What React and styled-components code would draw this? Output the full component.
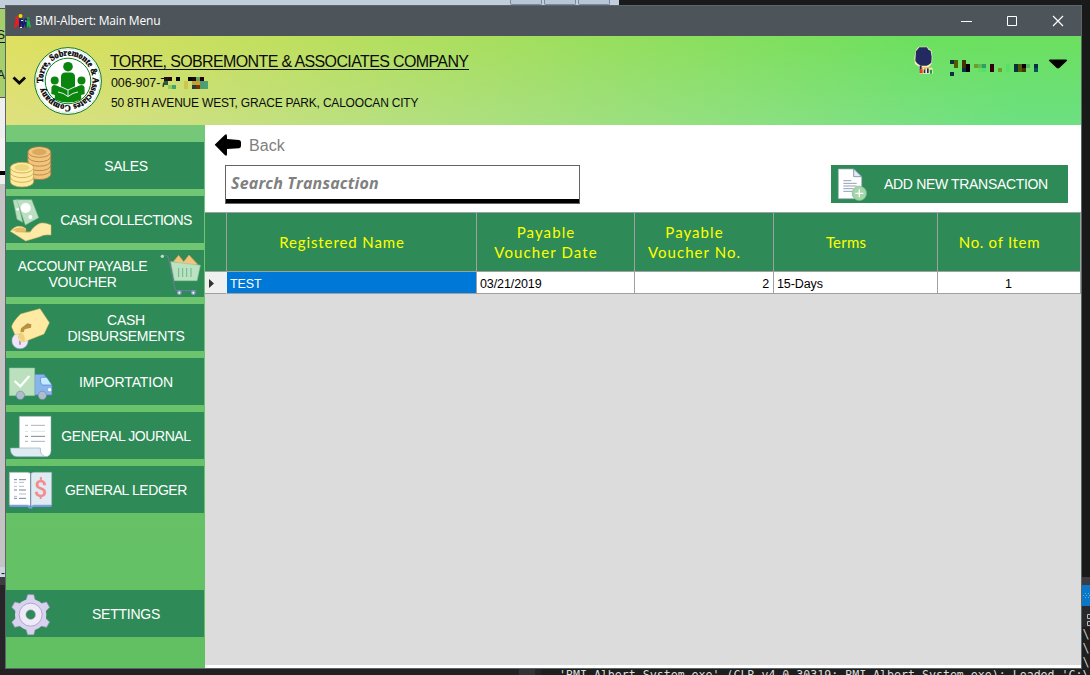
import React from 'react';
import styled, { createGlobalStyle } from 'styled-components';

const sans = '"Liberation Sans", Arial, sans-serif';
const green = '#2e8b57';

const Global = createGlobalStyle`
  * { box-sizing: border-box; }
  body { margin: 0; background: #1b1b1c; overflow: hidden; font-family: ${sans}; }
  svg { display: block; flex: none; }
`;

const Desktop = styled.div`
  width: 1090px;
  height: 675px;
  display: grid;
  grid-template-rows: 5px 664px 6px;
  overflow: hidden;
  background: #1b1b1c;
`;
const Middle = styled.div`
  display: grid;
  grid-template-columns: 5px 1077px 8px;
  min-height: 0;
`;
const TopStrip = styled.div`
  display: flex;
  overflow: hidden;
  background: #1a1a1a;
`;
const Toolbar = styled.div`
  width: 619px;
  height: 5px;
  padding-left: 510px;
  display: flex;
  gap: 2px;
  background: #c2cedb;
`;
const ToolButton = styled.span`
  width: 32px;
  height: 5px;
  border: 1px solid #7887a3;
  border-top: 0;
  border-radius: 0 0 2px 2px;
  background: #b9c6d5;
`;
const Side = styled.div`
  display: flex;
  flex-direction: column;
  overflow: hidden;
`;
const Slab = styled.div`
  flex: none;
  height: ${(p) => p.$h}px;
  background: ${(p) => p.$c};
  color: ${(p) => p.$fg || '#111'};
  font: ${(p) => p.$font || `12px/1 ${sans}`};
  padding-top: ${(p) => p.$top || 0}px;
  display: flex;
  justify-content: ${(p) => p.$align || 'flex-end'};
  border-bottom: ${(p) => (p.$dash ? '1px dashed #555' : '0')};
  text-decoration: ${(p) => (p.$line ? 'underline' : 'none')};
  text-underline-offset: 3px;
  white-space: pre;
  overflow: hidden;
`;
const Output = styled.div`
  padding-left: 559px;
  background: linear-gradient(90deg, #222224 519px, #343438 519px 535px, #252526 535px 541px, #1e1e1e 541px);
  color: #dcdcdc;
  font: 11.6px/13px "DejaVu Sans Mono", monospace;
  white-space: pre;
  overflow: hidden;
`;

const Win = styled.section`
  border: 1px solid #5b6669;
  display: grid;
  grid-template-rows: 30px 89px 1fr;
  overflow: hidden;
`;
const TitleBar = styled.header`
  display: flex;
  align-items: center;
  background: #4d545a;
  color: #fff;
  padding-left: 8px;
`;
const TitleText = styled.span`
  font: 12px/16px "Open Sans", sans-serif;
  letter-spacing: -0.18px;
  margin-left: 4px;
  flex: 1;
`;
const Controls = styled.div`
  display: flex;
  gap: 34px;
  padding-right: 17px;
`;

const Banner = styled.div`
  position: relative;
  display: flex;
  background: linear-gradient(96deg, #e0e05e, #a6df5d 46%, #6ce05e 84%);
  &::before {
    content: '';
    position: absolute;
    inset: 0;
    background: linear-gradient(96deg, #e0e080, #a6df80 50%, #6ce082 94%);
    mask-image: linear-gradient(#0000, #000);
  }
  > * { position: relative; }
`;
const Company = styled.div`
  padding: 16px 0 0 8px;
  flex: 1;
  color: #0c0c0c;
`;
const CompanyName = styled.div`
  font: 16px/20px ${sans};
  letter-spacing: -0.63px;
  width: 359px;
  height: 18px;
  border-bottom: 1px solid #111;
  white-space: nowrap;
`;
const CompanyLine = styled.div`
  display: flex;
  align-items: center;
  font: ${(p) => p.$size}px/20px ${sans};
  letter-spacing: ${(p) => p.$ls}px;
  height: 20px;
  margin-left: 1px;
  margin-top: ${(p) => p.$mt || 0}px;
  white-space: nowrap;
  svg { margin-left: -3px; }
`;
const User = styled.div`
  display: flex;
  align-items: flex-start;
  padding: 10px 13px 0 0;
`;
const UserName = styled.div`
  padding: 14px 0 0 16px;
`;

const Body = styled.div`
  display: grid;
  grid-template-columns: 199px 1fr;
  min-height: 0;
`;
const Nav = styled.nav`
  display: flex;
  flex-direction: column;
  gap: 7px;
  padding: 17px 1px 31px 0;
  background: linear-gradient(#74c878, #66c166 75%, #61c061);
`;
const NavButton = styled.div`
  height: 47px;
  display: flex;
  flex-direction: ${(p) => (p.$right ? 'row-reverse' : 'row')};
  align-items: center;
  background: ${green};
  color: #fff;
  margin-top: ${(p) => (p.$last ? 'auto' : 0)};
`;
const NavLabel = styled.span`
  flex: 1;
  text-align: center;
  font: 14px/16px ${sans};
  letter-spacing: ${(p) => p.$ls || 0}px;
  padding: ${(p) => (p.$right ? '1px 0 0 3px' : '1px 6px 0 0')};
  white-space: pre;
`;

const Main = styled.main`
  display: flex;
  flex-direction: column;
  background: #fff;
  padding-bottom: 3px;
  min-width: 0;
`;
const Back = styled.div`
  display: flex;
  align-items: center;
  gap: 8px;
  height: 40px;
  padding-left: 9px;
  color: #808080;
  font: 16px/20px ${sans};
  letter-spacing: 0.1px;
`;
const BackText = styled.span`
  padding-top: 1px;
`;
const Actions = styled.div`
  display: flex;
  justify-content: space-between;
  padding: 0 13px 0 20px;
  height: 47px;
`;
const Search = styled.div`
  width: 355px;
  height: 39px;
  border: 1px solid #646464;
  box-shadow: inset 0 -4px #000;
  padding: 6px 0 0 5px;
  color: #808080;
  font: italic bold 16px/22px "Open Sans", sans-serif;
  letter-spacing: 0.17px;
`;
const AddButton = styled.div`
  width: 237px;
  height: 38px;
  display: flex;
  align-items: center;
  background: ${green};
  color: #fff;
  font: 14px/16px ${sans};
  letter-spacing: -0.33px;
  white-space: nowrap;
`;
const Grid = styled.div`
  flex: 1;
  background: #dcdcdc;
`;
const Row = styled.div`
  display: grid;
  grid-template-columns: 22px 250px 158px 139px 164px 143px;
  height: ${(p) => p.$h}px;
  border-top: ${(p) => (p.$head ? 1 : 0)}px solid #a0a0a0;
`;
const HeadCell = styled.div`
  display: flex;
  align-items: center;
  justify-content: center;
  text-align: center;
  padding: 0 19px 0 0;
  background: ${green};
  color: #ff0;
  font: 15px/20px Lato, "Century Gothic", sans-serif;
  letter-spacing: ${(p) => p.$ls}px;
  white-space: pre;
  border-right: 1px solid #a0a0a0;
  border-bottom: 1px solid #a0a0a0;
`;
const Cell = styled.div`
  display: flex;
  align-items: center;
  justify-content: ${(p) => p.$align || 'flex-start'};
  padding: 2px 4px 0 3px;
  background: ${(p) => p.$bg || '#fff'};
  color: ${(p) => p.$fg || '#000'};
  font: 12.5px/16px ${sans};
  letter-spacing: -0.1px;
  border-right: 1px solid ${(p) => (p.$plain ? p.$bg : '#a0a0a0')};
  border-bottom: 1px solid #a0a0a0;
`;

const Mosaic = ({ w, h, cells }) => (
  <svg width={w * 4} height={h * 4} viewBox={`0 0 ${w} ${h}`} shapeRendering="crispEdges">
    {cells.map(([x, y, c, t = 1]) => (
      <rect key={`${x}-${y}`} x={x} y={y} width="1" height={t} fill={c} />
    ))}
  </svg>
);

const taxCells = [
  [0, 0, '#1c1710'], [1, 0, '#2a0808'], [0, 1, '#285c46'], [1, 2, '#8fcf62'], [2, 2, '#4ba070'], [3, 0, '#050505'],
  [5, 1, '#d4c24e', 2], [6, 0, '#080304'], [7, 0, '#140a06'], [7, 1, '#c3a12f'], [8, 0, '#64a070'],
  [7, 2, '#263c48'], [8, 1, '#c9a030'], [8, 2, '#7b3500'], [9, 0, '#260006'], [9, 1, '#4f9b72', 2], [10, 1, '#4fa075', 2],
];
const nameCells = [
  [0, 0, '#06323d'], [1, 0, '#555b00', 2], [0, 3, '#06323d'], [3, 0, '#443300', 2], [3, 2, '#06323d'],
  [4, 1, '#080008', 2], [6, 1, '#6f9d29'], [7, 1, '#5abb55'], [8, 1, '#309c68'], [7, 2, '#63df58'], [8, 2, '#4fe06e'],
  [10, 1, '#35000b', 2], [12, 2, '#6f9d29'], [14, 1, '#58df69', 2], [16, 1, '#06323d', 2], [17, 1, '#555b00', 2],
  [18, 1, '#08000c'], [18, 2, '#443300'], [19, 1, '#56bb60'], [21, 1, '#06323d'], [21, 2, '#07545b'],
];

const AppIcon = () => (
  <svg width="17" height="15" viewBox="0 0 17 15">
    <circle cx="6.500" cy="2" r="2" fill="#ffd400" />
    <circle cx="2.800" cy="4" r="1.800" fill="#f02020" />
    <circle cx="14" cy="4.500" r="1.700" fill="#1d9a4a" />
    <path d="M0 13.500 1.500 6h3l1.300 7.500H3.700L3 10l-1 3.500z" fill="#f01c1c" />
    <path d="M4.800 13.500 5.300 4.500h3.400l1 5 .8-5h2.500l.7 9h-2.200l-.6-4-1.100 4H8l-.8-4-.6 4z" fill="#141d70" />
    <path d="M12.800 6.500h2.800l1.400 7h-2l-.8-3-.4 3h-1.300z" fill="#20b64a" />
    <path d="M7 6.500h2M6 13.500h2M11 7h1.500" stroke="#e8eeff" strokeWidth="1" />
  </svg>
);

const CompanyLogo = () => (
  <svg width="68" height="68" viewBox="0 0 68 68" style={{ marginTop: 11 }}>
    <circle cx="34" cy="34" r="33.4" fill="#fff" stroke="#0d7a2a" strokeWidth="1" />
    <circle cx="34" cy="34" r="31.8" fill="none" stroke="#bfe3c0" strokeWidth=".6" />
    <circle cx="34" cy="34" r="22.8" fill="#fff" stroke="#0a7f1d" strokeWidth="1" />
    <defs>
      <path id="ring" d="M9.200 36A24.800 24.800 0 1 1 9.500 38" />
    </defs>
    <text fontFamily="Liberation Serif, serif" fontWeight="bold" fontSize="9.200" fill="#000" stroke="#000" strokeWidth=".35">
      <textPath href="#ring" textLength="151" lengthAdjust="spacingAndGlyphs">Torre, Sobremonte &amp; Associates Company</textPath>
    </text>
    <g fill="#0a860f">
      <circle cx="34" cy="19.700" r="4.800" />
      <circle cx="20.700" cy="33.500" r="4" />
      <circle cx="47.500" cy="33.500" r="4" />
      <path d="M27 41V30q0-4.500 4.500-4.500h5q4.500 0 4.500 4.500v11l-7 3z" />
      <path d="M17.500 40q1.500-3 5-1.500L34 43.500l11.500-5q3.500-1.500 5 1.500l.2 7-3.500 1v4.500Q41 55.500 34 55.500t-13.200-3V48l-3.500-1z" />
    </g>
    <path d="M24.500 38.500 34 43l9.500-4.500M24 45q5 .5 10 4.500 5-4 10-4.500M34 43v6.500M26.500 31v7.500M41.500 31v7.500" fill="none" stroke="#fff" strokeWidth=".9" />
  </svg>
);

const UserIcon = () => (
  <svg width="20" height="30" viewBox="162 141 60 90">
    <path d="M176 143h27l3 7 8 3 3 20-1 20-5 6-8 7 14 0 2 18h-40l-1-21-13-8-2-18 5-24z" fill="#f5eec0" />
    <path d="M178 145h23l4 7 7 3 3 18-1 18-8 6-6 3h-18l-11-7-5-8 2-28z" fill="#232a62" />
    <path d="M179 200h6v22h-6zM191 207h5v15h-5zM201 208h5v14h-5z" fill="#20285f" />
    <path d="M179 210h9v13h-7z" fill="#ef3824" />
    <path d="M209 212h7v12h-6z" fill="#219b42" />
    <path d="M186 206h9l-4 8zM197 206h16" stroke="#e9b93c" strokeWidth="3" fill="#fff" />
  </svg>
);

const NavIcon = ({ vx = 18, vy, children }) => (
  <svg width="48" height="47" viewBox={`${vx} ${vy} 144 141`} strokeLinejoin="round">{children}</svg>
);

const Stack = ({ cx, top, rx, ry, layers, step, fill, line, inner }) => (
  <g stroke={line} strokeWidth="2.200">
    <path
      d={`M${cx - rx} ${top}V${top + layers * step}A${rx} ${ry} 0 0 0 ${cx + rx} ${top + layers * step}V${top}`}
      fill={fill}
    />
    {Array.from({ length: layers - 1 }, (_, i) => (
      <path key={i} fill="none" d={`M${cx - rx} ${top + (i + 1) * step}a${rx} ${ry} 0 0 0 ${rx * 2} 0`} />
    ))}
    <ellipse cx={cx} cy={top} rx={rx} ry={ry} fill={fill} />
    <ellipse cx={cx} cy={top} rx={rx - 13} ry={ry - 6} fill={inner} stroke="none" />
  </g>
);

const SalesIcon = () => (
  <NavIcon vy={66}>
    <Stack cx={118} top={96} rx={34.500} ry={16} layers={5} step={13.300} fill="#f3c57c" line="#a8793f" inner="#d9a962" />
    <Stack cx={66} top={143} rx={35} ry={16} layers={3} step={14} fill="#ffeaa0" line="#c2a04c" inner="#ecd67e" />
  </NavIcon>
);
const CollectIcon = () => (
  <NavIcon vy={228}>
    <path d="M39 240l14-1 15 68-17-9z" fill="#b9dfbf" stroke="#7fb795" strokeWidth="1.500" />
    <path d="M50 239h45l21 54-40 22z" fill="#bbe0c1" stroke="#7fb795" strokeWidth="1.500" />
    <circle cx="77" cy="264" r="15" fill="#fff" />
    <circle cx="91" cy="291" r="6" fill="#fff" />
    <circle cx="53" cy="268" r="4" fill="#fff" />
    <path d="M31 334q12-15 25-15 12-1 22 7l-2 10h14q14-20 30-26 11-4 33 5v30q-20-3-36 6l-40 12-46-29z" fill="#ffe9a6" stroke="#dcb867" strokeWidth="1.500" />
    <path d="M35 331q21-14 42-5l-1 10-25-2z" fill="#e3be68" />
    <path d="M46 335l30 1h14l5-5" fill="none" stroke="#c79e49" strokeWidth="2" />
  </NavIcon>
);
const CartIcon = () => (
  <NavIcon vx={468} vy={15}>
    <path d="M519 51l17-20 15 19 16-20 26 28-20 6z" fill="#f3c57c" stroke="#d99b52" strokeWidth="2" />
    <path d="M512 50l89 11-10 46h-68z" fill="#bbe3c2" stroke="#8fc9a3" strokeWidth="2" />
    <path d="M536 69v27M548 69v27M560 69v27M573 69v27" stroke="#6fb58b" strokeWidth="3" />
    <path d="M490 31q12-2 15 7l20 94q2 5 8 5h58" fill="none" stroke="#657d91" strokeWidth="3.500" />
    <circle cx="487" cy="34" r="5" fill="#bbe3c2" />
    <circle cx="538" cy="143" r="5" fill="#fff" stroke="#8a9dc4" strokeWidth="4" />
    <circle cx="580" cy="143" r="5" fill="#fff" stroke="#8a9dc4" strokeWidth="4" />
  </NavIcon>
);
const DisburseIcon = () => (
  <NavIcon vy={177}>
    <circle cx="60" cy="287" r="24.500" fill="#ece6f8" stroke="#a391c0" strokeWidth="1.500" />
    <path d="M60 276v23M56 279l4-3" stroke="#a08fbe" strokeWidth="5" fill="none" />
    <path d="M62 207l58-16 28 42-16 34-46 18q-12 7-26 4-10-8-2-22l-13 2-10-24q3-14 27-38" fill="#ffeaa4" stroke="#e0bf69" strokeWidth="1.500" />
    <path d="M63 250l19-15 12 3-1 10-19 5-3 9-10-2z" fill="#b99142" />
    <path d="M56 268q0 18 13 21l6-3q0-14-10-24-8 0-9 6" fill="#efd17d" />
  </NavIcon>
);
const TruckIcon = () => (
  <NavIcon vy={9}>
    <path d="M104 58h28l24 32v30h-52z" fill="#8ab4ec" stroke="#527fd0" strokeWidth="2" />
    <path d="M28 39h76v83H28z" fill="#bbe0be" stroke="#8cc79a" strokeWidth="1.500" />
    <path d="M44 78l17 16 27-31" fill="none" stroke="#fff" strokeWidth="6.500" strokeLinejoin="miter" />
    <path d="M121 72q0-5 6-5h13l16 23h-30q-5-6-5-18" fill="#c4ecff" stroke="#4379c2" strokeWidth="1.800" />
    <circle cx="149" cy="104" r="5" fill="#fff" />
    <circle cx="61" cy="121" r="12.500" fill="#afbccc" stroke="#7188a7" strokeWidth="2" />
    <circle cx="127" cy="121" r="12.500" fill="#afbccc" stroke="#7188a7" strokeWidth="2" />
  </NavIcon>
);
const JournalIcon = () => (
  <NavIcon vy={171}>
    <path d="M58 184h95v103q0 18-18 18l-77-20z" fill="#fff" stroke="#94a5b5" strokeWidth="1.500" />
    <path d="M31 279h90q-1 22 15 26H51q-20 0-20-26" fill="#dfebf2" stroke="#8fa5b4" strokeWidth="1.800" />
    <g strokeWidth="3">
      <path d="M75 211h9M93 211h42M75 259h9M93 259h42" stroke="#a9b3c1" />
      <path d="M75 229h9M93 229h42" stroke="#dde2e8" />
      <path d="M75 244h9M93 244h42" stroke="#77879c" />
    </g>
  </NavIcon>
);
const DollarMark = styled.text`
  font: 500 70px Roboto, sans-serif;
  fill: #f58c8c;
  text-anchor: middle;
`;
const LedgerIcon = () => (
  <NavIcon vy={333}>
    <path d="M28 450h56l7 6 8-6h56v6H99l-4 5h-7l-5-5H28z" fill="#7ea8e3" stroke="#4c78bf" strokeWidth="1.500" />
    <path d="M28 352h54q9 0 10 7v97q-3-6-11-6H28z" fill="#fff" stroke="#9caec0" strokeWidth="1.800" />
    <path d="M155 352h-52q-10 0-11 7v97q2-6 11-6h52z" fill="#dfebf3" stroke="#9caec0" strokeWidth="1.800" />
    <path d="M92 357v100" stroke="#667e9e" strokeWidth="2.500" />
    <g strokeWidth="3" stroke="#75859b">
      <path d="M42 374h9M57 374h21M42 405h9M57 405h21M42 430h9M57 430h21" />
      <path d="M42 382h9M57 382h15M42 394h9M57 394h15M57 417h21M42 424h9" opacity=".55" />
    </g>
    <DollarMark x="122" y="425">$</DollarMark>
  </NavIcon>
);
const GearIcon = () => (
  <NavIcon vy={90}>
    <g transform="translate(92 164)">
      <g fill="#d9d2ee" stroke="#a89cc9" strokeWidth="2">
        {[0, 60, 120, 180, 240, 300].map((a) => (
          <path key={a} transform={`rotate(${a})`} d="M-14-42l5-18H9l5 18z" />
        ))}
      </g>
      <circle r="47" fill="#d9d2ee" />
      <circle r="34.500" fill="#eeeaf7" stroke="#a79ac6" strokeWidth="2.500" />
      <circle r="14.500" fill={green} stroke="#b6abd2" strokeWidth="1.500" />
    </g>
  </NavIcon>
);
const AddIcon = () => (
  <svg width="53" height="38" viewBox="693 120 159 114">
    <path d="M715 132h47l23 22v67h-70z" fill="#fff" stroke="#9aa9bd" strokeWidth="2" />
    <path d="M761 132v23h24z" fill="#e3ecf3" stroke="#758aa8" strokeWidth="2.500" />
    <path d="M730 167h24M730 175h40M730 183h40M730 191h30M730 199h26" stroke="#7b8da8" strokeWidth="2.500" />
    <circle cx="778" cy="205" r="21.500" fill="#a5d6a9" stroke="#74b887" strokeWidth="2" />
    <path d="M778 193v24M766 205h24" stroke="#fff" strokeWidth="4" />
  </svg>
);

const items = [
  { label: 'SALES', Icon: SalesIcon, ls: -0.35 },
  { label: 'CASH COLLECTIONS', Icon: CollectIcon, ls: -0.62 },
  { label: 'ACCOUNT PAYABLE\nVOUCHER', Icon: CartIcon, right: true, ls: -0.27 },
  { label: 'CASH\nDISBURSEMENTS', Icon: DisburseIcon, ls: -0.28 },
  { label: 'IMPORTATION', Icon: TruckIcon, ls: -0.08 },
  { label: 'GENERAL JOURNAL', Icon: JournalIcon, ls: -0.42 },
  { label: 'GENERAL LEDGER', Icon: LedgerIcon, ls: -0.42 },
  { label: 'SETTINGS', Icon: GearIcon, last: true, ls: -0.25 },
];
const columns = [
  ['', 0],
  ['Registered Name', 0.9],
  ['Payable\nVoucher Date', 1.1],
  ['Payable\nVoucher No.', 1.05],
  ['Terms', 0.2],
  ['No. of Item', 0.7],
];

export default function App() {
  return (
    <>
      <Global />
      <Desktop>
        <TopStrip>
          <Toolbar><ToolButton /><ToolButton /><ToolButton /></Toolbar>
        </TopStrip>
        <Middle>
          <Side>
            <Slab $h={4} $c="#c2cedb" $dash />
            <Slab $h={36} $c="#a5cf6b" $top={20} $line>ES</Slab>
            <Slab $h={53} $c="#a5cf6b" $top={24} $dash>A</Slab>
            <Slab $h={40} $c="#efefef" />
            <Slab $h={33} $c="#f3f3f3" />
            <Slab $h={4} $c="#000" />
            <Slab $h={9} $c="#efefef" />
            <Slab $h={383} $c="#c4c4c4" />
            <Slab $h={10} $c="#ccd6e2" $top={0}>-</Slab>
            <Slab $h={8} $c="#3c3c42" />
            <Slab $h={84} $c="#262628" />
          </Side>
          <Win>
            <TitleBar>
              <AppIcon />
              <TitleText>BMI-Albert: Main Menu</TitleText>
              <Controls>
                <svg width="12" height="12"><path d="M1 6.500h11" stroke="#fff" /></svg>
                <svg width="12" height="12"><path d="M1.500 1.500h9v9h-9z" fill="none" stroke="#fff" /></svg>
                <svg width="12" height="12"><path d="M1 1l10 10M11 1 1 11" stroke="#fff" strokeWidth="1.200" /></svg>
              </Controls>
            </TitleBar>
            <Banner>
              <svg width="28" height="60" viewBox="0 0 28 60"><path d="M7.500 41.500l5.800 5.500 5.800-5.500" fill="none" stroke="#080808" strokeWidth="2.800" /></svg>
              <CompanyLogo />
              <Company>
                <CompanyName>TORRE, SOBREMONTE &amp; ASSOCIATES COMPANY</CompanyName>
                <CompanyLine $mt={3} $size={12.5} $ls={-0.1}>006-907-7<Mosaic w={11} h={3} cells={taxCells} /></CompanyLine>
                <CompanyLine $size={12} $ls={-0.2}>50 8TH AVENUE WEST, GRACE PARK, CALOOCAN CITY</CompanyLine>
              </Company>
              <User>
                <UserIcon />
                <UserName><Mosaic w={22} h={4} cells={nameCells} /></UserName>
                <svg width="30" height="28" viewBox="0 0 30 28"><path d="M12 13.500h16q2 0 .5 1.800l-7 6.500q-1.500 1.300-3 0l-7-6.500q-1.500-1.800.5-1.800" fill="#000" /></svg>
              </User>
            </Banner>
            <Body>
              <Nav>
                {items.map(({ label, Icon, right, last, ls }) => (
                  <NavButton key={label} $right={right} $last={last}>
                    <Icon />
                    <NavLabel $right={right} $ls={ls}>{label}</NavLabel>
                  </NavButton>
                ))}
              </Nav>
              <Main>
                <Back>
                  <svg width="27" height="24" viewBox="42 24 81 72"><path d="M44 59l31-30q6-3 6 4v9l36 3q6 1 6 7v11q0 6-6 7l-36 2v15q0 8-6 4z" fill="#000" /></svg>
                  <BackText>Back</BackText>
                </Back>
                <Actions>
                  <Search>Search Transaction</Search>
                  <AddButton><AddIcon />ADD NEW TRANSACTION</AddButton>
                </Actions>
                <Grid>
                  <Row $h={60} $head>
                    {columns.map(([name, ls]) => <HeadCell key={name} $ls={ls}>{name}</HeadCell>)}
                  </Row>
                  <Row $h={22}>
                    <Cell $bg="#f0f0f0" $plain>
                      <svg width="6" height="10" viewBox="0 0 6 10"><path d="M1 0l5 4.500L1 9z" fill="#333" /></svg>
                    </Cell>
                    <Cell $bg="#0078d7" $fg="#fff">TEST</Cell>
                    <Cell>03/21/2019</Cell>
                    <Cell $align="flex-end">2</Cell>
                    <Cell>15-Days</Cell>
                    <Cell $align="center">1</Cell>
                  </Row>
                </Grid>
              </Main>
            </Body>
          </Win>
          <Side>
            <Slab $h={572} $c="#181918" />
            <Slab $h={8} $c="#3c3c42" />
            <Slab $h={21} $c="#0a78c8">
              <svg width="8" height="21"><path d="M1 10.500h7M3 8.500h5M3 12.500h5" stroke="#5aa9e0" strokeDasharray="1 2" /></svg>
            </Slab>
            <Slab $h={21} $c="#2a2a2e">
              <svg width="8" height="21"><path d="M5.500 8.500h3v4h-3zM5.500 15.500h3v4h-3z" fill="none" stroke="#bbb" /></svg>
            </Slab>
            <Slab $h={42} $c="#1e1e1e" $fg="#c8c8c8" $align="center" $font={'11.6px/14px "DejaVu Sans Mono", monospace'}>{'\\\n\\\n\\'}</Slab>
          </Side>
        </Middle>
        <Output>{"'BMI_Albert_System.exe' (CLR v4.0.30319: BMI_Albert_System.exe): Loaded 'C:\\"}</Output>
      </Desktop>
    </>
  );
}
